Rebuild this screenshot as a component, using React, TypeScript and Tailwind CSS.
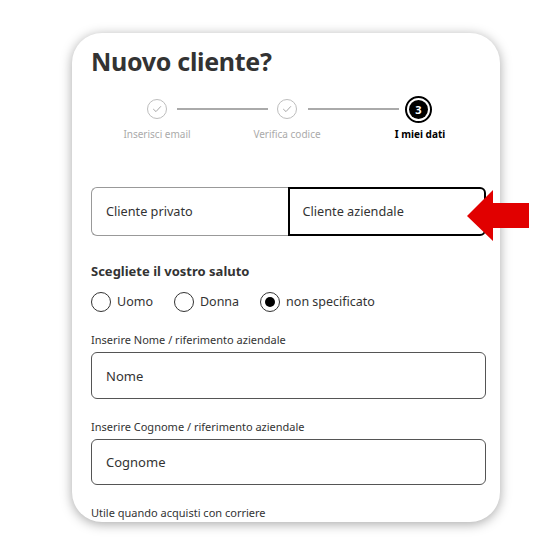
import { useState } from 'react'

function CheckStep() {
  return (
    <div className="w-[20px] h-[20px] rounded-full border border-[#bdbdbd] flex items-center justify-center shrink-0">
      <svg width="12" height="12" viewBox="0 0 12 12" fill="none">
        <path d="M2.5 6.3 L5 8.6 L9.6 3.6" stroke="#a8a8a8" strokeWidth="1" strokeLinecap="round" strokeLinejoin="round" />
      </svg>
    </div>
  )
}

function Radio({ label, checked, onClick }: { label: string; checked: boolean; onClick: () => void }) {
  return (
    <button type="button" onClick={onClick} className="flex items-center gap-[6px] h-[20px]">
      <span className="w-[20px] h-[20px] rounded-full border border-[#333] flex items-center justify-center">
        {checked && <span className="w-[10px] h-[10px] rounded-full bg-black" />}
      </span>
      <span className="text-[12.5px] leading-[20px] text-[#333]">{label}</span>
    </button>
  )
}

export default function App() {
  const [type, setType] = useState<'privato' | 'aziendale'>('aziendale')
  const [salute, setSalute] = useState('non specificato')

  return (
    <div className="relative w-[550px] h-[550px] bg-white overflow-hidden font-['Noto_Sans',sans-serif] text-[#333]">
      <div className="ml-[72px] mt-[33px] w-[428px] h-[489px] rounded-[30px] bg-white shadow-[0_2px_12px_rgba(0,0,0,0.35)] overflow-hidden pl-[19px] pr-[14px] pt-[11px]">
        <h1 className="text-[25px] leading-[34px] font-bold tracking-[-0.3px] text-[#333]">Nuovo cliente?</h1>

        {/* stepper */}
        <div className="mt-[17px] h-[28px] flex items-center pl-[56px]">
          <CheckStep />
          <div className="ml-[10px] w-[91px] h-[2px] bg-[#aaa]" />
          <div className="ml-[9px]"><CheckStep /></div>
          <div className="ml-[11px] w-[91px] h-[2px] bg-[#aaa]" />
          <div className="ml-[6px] w-[27px] h-[27px] rounded-full border-2 border-black p-[2px]">
            <div className="w-full h-full rounded-full bg-black flex items-center justify-center text-white text-[11px] font-bold leading-none">3</div>
          </div>
        </div>
        <div className="mt-[4px] flex text-[10px] leading-[14px]">
          <div className="ml-[6px] w-[120px] text-center text-[#aaa]">Inserisci email</div>
          <div className="ml-[10px] w-[120px] text-center text-[#aaa]">Verifica codice</div>
          <div className="ml-[13px] w-[120px] text-center font-bold text-black">I miei dati</div>
        </div>

        {/* customer type */}
        <div className="mt-[46px] flex h-[49px]">
          <button
            type="button"
            onClick={() => setType('privato')}
            className={`flex-1 text-left pl-[14px] text-[12.7px] rounded-l-[6px] ${type === 'privato' ? 'border-2 border-black' : 'border border-r-0 border-[#999]'}`}
          >
            Cliente privato
          </button>
          <button
            type="button"
            onClick={() => setType('aziendale')}
            className={`flex-1 text-left pl-[13px] text-[12.7px] rounded-r-[6px] ${type === 'aziendale' ? 'border-2 border-black' : 'border border-l-0 border-[#999]'}`}
          >
            Cliente aziendale
          </button>
        </div>

        {/* salutation */}
        <div className="mt-[25px] text-[13px] leading-[20px] font-bold">Scegliete il vostro saluto</div>
        <div className="mt-[11px] flex items-center gap-[21px]">
          {['Uomo', 'Donna', 'non specificato'].map((s) => (
            <Radio key={s} label={s} checked={salute === s} onClick={() => setSalute(s)} />
          ))}
        </div>

        {/* name */}
        <div className="mt-[20px] text-[11px] leading-[16px]">Inserire Nome / riferimento aziendale</div>
        <input
          placeholder="Nome"
          className="mt-[4px] w-full h-[47px] rounded-[6px] border border-[#555] px-[14px] text-[13px] placeholder:text-[#333] outline-none"
        />

        <div className="mt-[20px] text-[11px] leading-[16px]">Inserire Cognome / riferimento aziendale</div>
        <input
          placeholder="Cognome"
          className="mt-[4px] w-full h-[46px] rounded-[6px] border border-[#555] px-[14px] text-[13px] placeholder:text-[#333] outline-none"
        />

        <div className="mt-[20px] text-[11px] leading-[16px]">Utile quando acquisti con corriere</div>
      </div>

      {/* red pointer arrow */}
      <svg className="absolute left-[467px] top-[190px]" width="62" height="52" viewBox="0 0 62 52">
        <polygon points="0,26 26,0 26,13 62,13 62,38 26,38 26,51" fill="#e10000" />
      </svg>
    </div>
  )
}
